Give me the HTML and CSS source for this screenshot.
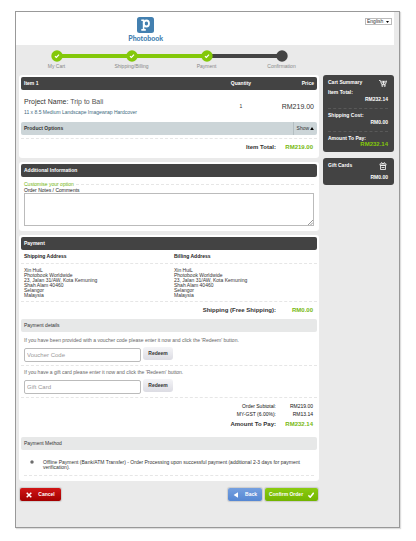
FILE: index.html
```html
<!DOCTYPE html>
<html lang="en">
<head>
<meta charset="utf-8">
<title>Photobook - Confirmation</title>
<link rel="stylesheet" href="styles.css">
</head>
<body>
<div class="frame">
  <header class="top">
    <a class="logo" href="#">
      <svg class="logo-mark" viewBox="0 0 17 16" aria-hidden="true">
        <rect width="17" height="16" rx="2.5" fill="#4380b0"/>
        <path d="M4.300 3.300H6.600V12.600M4.300 12.900h4.500" fill="none" stroke="#fff" stroke-width="1.600"/>
        <ellipse cx="9.400" cy="6.500" rx="2.600" ry="3" fill="none" stroke="#fff" stroke-width="1.800"/>
      </svg>
      <span>Photobook</span>
    </a>
    <div class="lang">
      <select aria-label="Language"><option>English</option></select>
      <svg viewBox="0 0 3 2" aria-hidden="true"><path d="M0 0h3L1.500 2z"/></svg>
    </div>
  </header>

  <div class="layout">
    <main>
      <ol class="steps">
        <li class="done"><svg viewBox="0 0 12 12"><circle cx="6" cy="6" r="5.700"/><path d="M4 6.200 5.400 7.500 8 4.600"/></svg>My Cart</li>
        <li class="done"><svg viewBox="0 0 12 12"><circle cx="6" cy="6" r="5.700"/><path d="M4 6.200 5.400 7.500 8 4.600"/></svg>Shipping/Billing</li>
        <li class="done"><svg viewBox="0 0 12 12"><circle cx="6" cy="6" r="5.700"/><path d="M4 6.200 5.400 7.500 8 4.600"/></svg>Payment</li>
        <li><svg viewBox="0 0 12 12"><circle cx="6" cy="6" r="5.700"/></svg>Confirmation</li>
      </ol>

      <section class="card">
        <div class="bar dark item-row"><h2>Item 1</h2><span class="qty">Quantity</span><span class="price">Price</span></div>
        <div class="item-row product">
          <div>
            <h3>Project Name: <span>Trip to Bali</span></h3>
            <a href="#">11 x 8.5 Medium Landscape Imagewrap Hardcover</a>
          </div>
          <span class="qty">1</span><span class="price big">RM219.00</span>
        </div>
        <div class="bar options"><b>Product Options</b><button type="button">Show <svg viewBox="0 0 5 4"><path d="M0 4 2.500 0 5 4z"/></svg></button></div>
        <div class="total item-total"><span>Item Total:</span><b>RM219.00</b></div>
      </section>

      <section class="card">
        <div class="bar dark"><h2>Additional Information</h2></div>
        <div class="notes">
          <p class="legend">Customise your option</p>
          <label for="notes">Order Notes / Comments</label>
          <div class="area">
            <textarea id="notes"></textarea>
            <svg viewBox="0 0 5 5" aria-hidden="true"><path d="M0 5 5 0M2.500 5 5 2.500"/></svg>
          </div>
        </div>
      </section>

      <section class="card">
        <div class="bar dark"><h2>Payment</h2></div>
        <div class="pair heads"><h4>Shipping Address</h4><h4>Billing Address</h4></div>
        <div class="pair addresses">
          <address>Xin HuiL<br>Photobook Worldwide<br>23, Jalan 31/AW, Kota Kemuning<br>Shah Alam 40460<br>Selangor<br>Malaysia</address>
          <address>Xin HuiL<br>Photobook Worldwide<br>23, Jalan 31/AW, Kota Kemuning<br>Shah Alam 40460<br>Selangor<br>Malaysia</address>
        </div>
        <div class="total"><span>Shipping (Free Shipping):</span><b>RM0.00</b></div>
        <h3 class="bar light">Payment details</h3>
        <form class="redeem">
          <label for="voucher">If you have been provided with a voucher code please enter it now and click the 'Redeem' button.</label>
          <div><input id="voucher" type="text" placeholder="Voucher Code"><button type="button">Redeem</button></div>
        </form>
        <form class="redeem">
          <label for="gift">If you have a gift card please enter it now and click the 'Redeem' button.</label>
          <div><input id="gift" type="text" placeholder="Gift Card"><button type="button">Redeem</button></div>
        </form>
        <div class="sums">
          <div class="sum"><span>Order Subtotal:</span><span>RM219.00</span></div>
          <div class="sum"><span>MY-GST (6.00%):</span><span>RM13.14</span></div>
          <div class="total"><span>Amount To Pay:</span><b>RM232.14</b></div>
        </div>
        <h3 class="bar light">Payment Method</h3>
        <div class="method">
          <input id="offline" type="radio" name="method" checked>
          <label for="offline">Offline Payment (Bank/ATM Transfer) - Order Processing upon successful payment (additional 2-3 days for payment verification).</label>
        </div>
      </section>

      <div class="actions">
        <button type="button" class="btn red"><svg viewBox="0 0 6 6"><path d="M.7.7l4.600 4.600M5.300.7.7 5.300"/></svg>Cancel</button>
        <button type="button" class="btn blue"><svg viewBox="0 0 6 6"><path class="solid" d="M5 .3v5.400L.6 3z"/></svg>Back</button>
        <button type="button" class="btn green">Confirm Order<svg viewBox="0 0 6 6"><path d="M.4 3.400 2.200 5.200 5.700.8"/></svg></button>
      </div>
    </main>

    <aside>
      <section class="side">
        <h2>Cart Summary
          <svg viewBox="0 0 8 8"><path d="M0 1.500h1.300L2.700 5.500h3.600L7.800 1.500M2.300 2.300h4.600M2.500 3.800h4M4.500 2v3"/><circle cx="3.300" cy="6.900" r=".6"/><circle cx="5.800" cy="6.900" r=".6"/></svg>
        </h2>
        <dl>
          <div><dt>Item Total:</dt><dd>RM232.14</dd></div>
          <div><dt>Shipping Cost:</dt><dd>RM0.00</dd></div>
          <div class="pay"><dt>Amount To Pay:</dt><dd>RM232.14</dd></div>
        </dl>
      </section>
      <section class="side gift">
        <h2>Gift Cards
          <svg viewBox="0 0 8 8"><path d="M1.500 3.500h5v4h-5zM1 1.800h6v1.500H1zM2.200.3 4 1.800 5.800.3M2.500 5.500h3"/></svg>
        </h2>
        <p>RM0.00</p>
      </section>
    </aside>
  </div>
</div>
</body>
</html>
```
FILE: styles.css
```css
* { box-sizing: border-box; }
body {
  margin: 0;
  padding: 11px 16px 12px 15px;
  background: #fff;
  color: #333;
  font: 5px/5px "Liberation Sans", Arial, sans-serif;
}
h2, h3, h4, p, ol, dl, dd { margin: 0; padding: 0; font: inherit; }
button, input, textarea, select { font: inherit; color: inherit; margin: 0; }
a { color: inherit; text-decoration: none; }

.frame {
  border: 1px solid #999;
  background: #eaeaea;
  box-shadow: 1px 1px 1px #ddd;
  padding-bottom: 26px;
}
.top {
  display: flex;
  align-items: flex-start;
  justify-content: space-between;
  height: 33px;
  margin-right: 5px;
  padding: 5px 2px 0 0;
  background: #fff;
}
.logo {
  display: flex;
  flex-direction: column;
  align-items: center;
  width: 69%;
  color: #4380b0;
  font: 900 7px/11px Lato, sans-serif;
}
.logo-mark { width: 17px; height: 16px; }
.lang {
  display: flex;
  align-items: center;
  width: 27px;
  height: 7px;
  margin-top: 1px;
  padding-right: 2px;
  border: 1px solid #bbb;
  background: #fff;
}
.lang select {
  flex: 1;
  min-width: 0;
  height: 5px;
  padding: 0 0 0 1px;
  border: 0;
  appearance: none;
  background: none;
  line-height: 5px;
}
.lang svg { width: 3px; height: 2px; }

.layout {
  display: grid;
  grid-template-columns: minmax(0, 1fr) 71px;
  gap: 4px;
  padding: 0 5px 0 3px;
}
.steps {
  display: grid;
  grid-template-columns: repeat(4, 1fr);
  height: 30px;
  padding-top: 5px;
  list-style: none;
  color: #888;
}
.steps li {
  position: relative;
  display: flex;
  flex-direction: column;
  align-items: center;
  gap: 2px;
}
.steps li + li::before {
  content: "";
  position: absolute;
  top: 4px;
  right: 50%;
  width: 100%;
  height: 4px;
  background: #444;
}
.steps li.done::before { background: #83c80a; }
.steps svg { position: relative; z-index: 1; width: 12px; height: 12px; fill: #444; }
.steps .done svg { fill: #83c80a; }
.steps path { fill: none; stroke: #fff; stroke-width: 1.200; }

.card {
  margin-bottom: 4px;
  padding: 2px;
  border-radius: 3px;
  background: #fff;
}
.bar {
  display: flex;
  align-items: center;
  height: 13px;
  padding: 0 3px;
  border-radius: 2px;
}
.dark { background: #434343; color: #fff; font-weight: bold; }
.light { background: #e7e8e8; }
.item-row { display: grid; grid-template-columns: 1fr 40px 53px; }
.qty { text-align: center; }
.price { text-align: right; }
.product { align-items: center; height: 32px; padding: 0 3px; }
.product h3 { font-size: 7px; line-height: 12px; }
.product h3 span { color: #555; }
.product a { display: block; line-height: 8px; color: #3d6a80; }
.big { font-size: 7px; }
.options { background: #ccd5d8; padding-right: 0; justify-content: space-between; }
.options button {
  height: 13px;
  width: 24px;
  padding: 0;
  border: 0;
  border-left: 1px solid #b4bec1;
  background: none;
}
.options svg { width: 4px; height: 3px; }
.total {
  display: grid;
  grid-template-columns: 1fr 37px;
  padding: 0 4px 0 0;
  text-align: right;
  font-weight: bold;
  font-size: 6px;
  line-height: 17px;
}
.total b { color: #76b80f; }
.item-total { margin-top: 3px; border-top: 1px dashed #e6e6e6; }

.notes { display: flex; flex-direction: column; padding: 4px 3px 3px; }
.legend { display: flex; align-items: center; gap: 2px; line-height: 6px; color: #6fb30b; }
.legend::after { content: ""; flex: 1; border-top: 1px dashed #e6e6e6; }
.notes label { line-height: 6px; color: #222; }
.area { position: relative; display: flex; }
.area textarea { flex: 1; height: 33px; border: 1px solid #bbb; padding: 2px; resize: none; }
.area svg { position: absolute; right: 1px; bottom: 1px; width: 5px; height: 5px; stroke: #999; }

.pair { display: grid; grid-template-columns: 150px 1fr; padding: 0 3px; border-bottom: 1px dashed #e6e6e6; }
.heads { line-height: 13px; color: #222; }
.heads h4 { font-weight: bold; }
.addresses { padding-top: 4px; padding-bottom: 3px; }
address { font-style: normal; }
.redeem { padding: 6px 3px 3px; border-bottom: 1px dashed #e6e6e6; color: #666; }
.redeem label { display: block; margin-bottom: 4px; }
.redeem + .redeem { padding-top: 4px; }
.redeem div { display: flex; gap: 2px; }
.redeem input {
  width: 117px;
  height: 14px;
  margin-top: 1px;
  padding: 0 2px;
  border: 1px solid #bbb;
  border-radius: 2px;
  background: #fff;
  font-size: 6px;
}
.redeem input::placeholder { color: #999; }
.redeem button {
  width: 30px;
  height: 13px;
  padding: 0;
  border: 0;
  border-radius: 3px;
  background: linear-gradient(#f4f4f7, #dcdce3);
  color: #333;
  font-weight: bold;
}
.sums { padding: 4px 0 6px; }
.sum {
  display: grid;
  grid-template-columns: 1fr 37px;
  padding-right: 4px;
  line-height: 8px;
  text-align: right;
  color: #111;
}
.sums .total { line-height: 13px; }
.method {
  display: flex;
  align-items: flex-start;
  gap: 9px;
  margin: 0 3px 3px;
  padding: 10px 8px 5px 6px;
  border-bottom: 1px dashed #e6e6e6;
}
.method input {
  flex: none;
  width: 4px;
  height: 4px;
  appearance: none;
  border: 1px solid #aaa;
  border-radius: 50%;
  background: #555;
}

.actions { display: flex; gap: 3px; padding: 3px 1px 0; }
.btn {
  display: flex;
  align-items: center;
  justify-content: center;
  gap: 6px;
  height: 13px;
  padding: 0 5px;
  border: 0;
  border-radius: 2px;
  color: #fff;
  font-weight: bold;
  white-space: nowrap;
  box-shadow: 0 0 1px 1px #ccc;
}
.btn svg { flex: none; width: 6px; height: 6px; fill: none; stroke: #fff; stroke-width: 1.500; }
.btn .solid { fill: #fff; stroke: none; }
.red { width: 41px; margin-right: auto; background: linear-gradient(#d01515, #a30000); }
.blue { width: 34px; background: linear-gradient(#76a0df, #5587d3); }
.green { width: 53px; gap: 5px; background: linear-gradient(#8acb10, #72b400); }

aside { padding-top: 30px; }
.side { margin-bottom: 6px; padding: 3px 6px 4px 5px; border-radius: 3px; background: #434343; color: #fff; font-weight: bold; }
.side h2 { display: flex; justify-content: space-between; line-height: 9px; }
.side svg { width: 8px; height: 8px; margin: 1px 1px 0 0; fill: none; stroke: #fff; stroke-width: .8; }
.side dl div { padding: 3px 0 5px; border-bottom: 1px dashed #595959; }
.side dl div + div { padding-top: 4px; }
.side dt { line-height: 5px; }
.side dd { line-height: 8px; text-align: right; }
.side dl .pay { border: 0; padding-bottom: 0; }
.pay dd { color: #83c80a; font-size: 6px; line-height: 7px; }
.gift p { padding-top: 3px; line-height: 8px; text-align: right; }
```
